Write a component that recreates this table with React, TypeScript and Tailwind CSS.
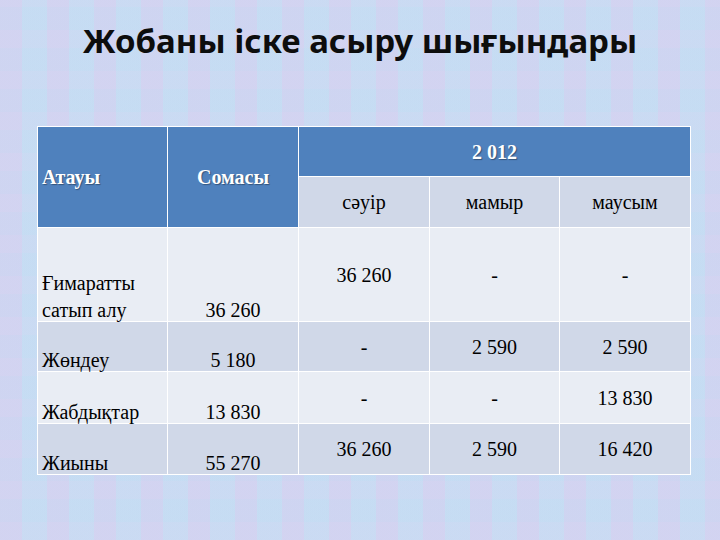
import React from 'react';

type Row = {
  name: string[];
  sum: string;
  months: string[];
  height: string;
  shade: string;
};

const rows: Row[] = [
  { name: ['Ғимаратты', 'сатып алу'], sum: '36 260', months: ['36 260', '-', '-'], height: 'h-[94px]', shade: 'bg-[#e9edf4]' },
  { name: ['Жөндеу'], sum: '5 180', months: ['-', '2 590', '2 590'], height: 'h-[50px]', shade: 'bg-[#d0d8e8]' },
  { name: ['Жабдықтар'], sum: '13 830', months: ['-', '-', '13 830'], height: 'h-[52px]', shade: 'bg-[#e9edf4]' },
  { name: ['Жиыны'], sum: '55 270', months: ['36 260', '2 590', '16 420'], height: 'h-[51px]', shade: 'bg-[#d0d8e8]' },
];

const months = ['сәуір', 'мамыр', 'маусым'];

const serif = "font-['Liberation_Serif','Times_New_Roman',serif]";
const headCell = `${serif} bg-[#4f81bd] border border-white text-white font-bold text-[20px] [text-shadow:1px_1px_1px_rgba(0,0,0,0.35)]`;
const bodyCell = `${serif} border border-white text-black font-normal text-[20px]`;

const App: React.FC = () => {
  return (
    <div className="w-[720px] h-[540px] overflow-hidden bg-[#c9d8f1] bg-[repeating-linear-gradient(90deg,rgba(218,204,240,0.35)_0px,rgba(218,204,240,0.35)_22px,rgba(192,226,246,0.3)_22px,rgba(192,226,246,0.3)_47px),repeating-linear-gradient(0deg,rgba(228,214,244,0.2)_0px,rgba(228,214,244,0.2)_18px,rgba(196,226,246,0.15)_18px,rgba(196,226,246,0.15)_41px)]">
      {/* Title */}
      <div className="h-[126px] pt-[18px]">
        <h1 className="text-center text-[33px] leading-[46px] font-bold text-[#0d0d0d] font-['Noto_Sans','Open_Sans',sans-serif]">
          Жобаны іске асыру шығындары
        </h1>
      </div>

      {/* Table */}
      <div className="pl-[37px]">
        <table className="table-fixed border-collapse w-[653px]">
          <colgroup>
            <col className="w-[130px]" />
            <col className="w-[131px]" />
            <col className="w-[131px]" />
            <col className="w-[130px]" />
            <col className="w-[131px]" />
          </colgroup>
          <thead>
            <tr className="h-[50px]">
              <th rowSpan={2} className={`${headCell} text-left align-middle pl-[4px]`}>
                Атауы
              </th>
              <th rowSpan={2} className={`${headCell} text-center align-middle`}>
                Сомасы
              </th>
              <th colSpan={3} className={`${headCell} text-center align-middle`}>
                2 012
              </th>
            </tr>
            <tr className="h-[51px] bg-[#d0d8e8]">
              {months.map((m) => (
                <th key={m} className={`${bodyCell} leading-[28px] text-center align-middle`}>
                  {m}
                </th>
              ))}
            </tr>
          </thead>
          <tbody>
            {rows.map((r) => (
              <tr key={r.sum + r.name[0]} className={`${r.height} ${r.shade}`}>
                <td className={`${bodyCell} text-left align-bottom pl-[4px]`}>
                  <div className="leading-[27px] -mb-[3px]">
                    {r.name.map((line) => (
                      <div key={line}>{line}</div>
                    ))}
                  </div>
                </td>
                <td className={`${bodyCell} text-center align-bottom`}>
                  <div className="leading-[27px] -mb-[3px]">{r.sum}</div>
                </td>
                {r.months.map((v, i) => (
                  <td key={i} className={`${bodyCell} leading-[28px] text-center align-middle`}>
                    {v}
                  </td>
                ))}
              </tr>
            ))}
          </tbody>
        </table>
      </div>
    </div>
  );
};

export default App;
